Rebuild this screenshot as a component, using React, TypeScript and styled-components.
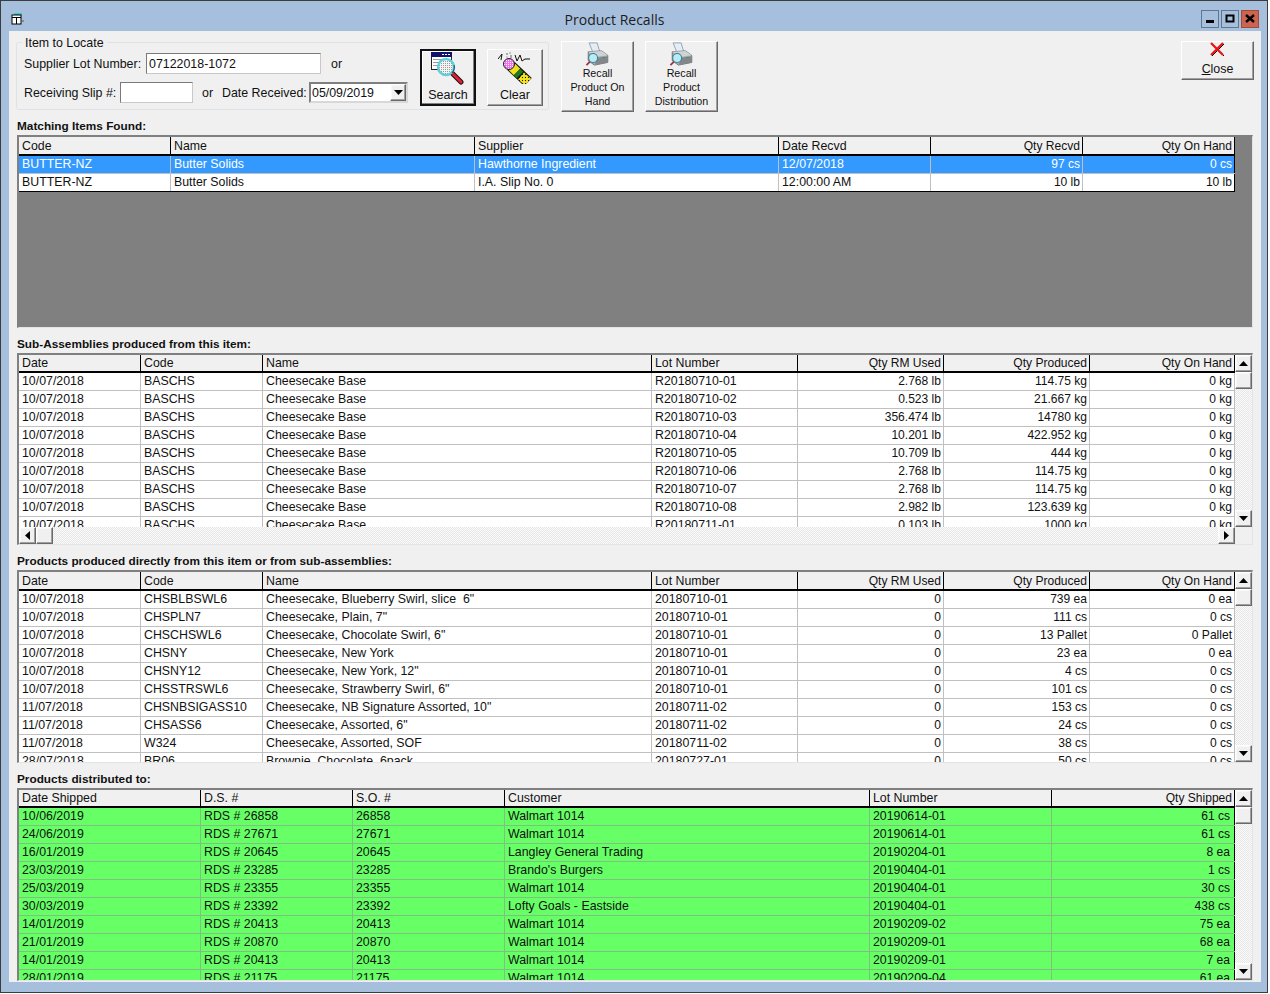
import React from 'react'
import styled, { createGlobalStyle } from 'styled-components'

const Global = createGlobalStyle`
  html, body { margin: 0; padding: 0; background: #fff; }
  body { font-family: "Liberation Sans", Arial, sans-serif; font-size: 12.4px; color: #111; }
`

const Window = styled.div`
  width: 1268px;
  height: 993px;
  box-sizing: border-box;
  background: #a6bfdc;
  border: 1px solid #3c3c3c;
  display: flex;
  flex-direction: column;
  overflow: hidden;
`
const TitleBar = styled.div`
  height: 30px;
  flex: none;
  display: flex;
  align-items: center;
  padding: 6px 8px 0 9px;
  box-sizing: border-box;
`
const TitleText = styled.div`
  flex: 1;
  text-align: center;
  font-family: "Open Sans", sans-serif;
  font-size: 14px;
  color: #1c1c1c;
  padding-left: 4px;
`
const CaptionButtons = styled.div`
  display: flex;
  gap: 2px;
`
const CaptionBtn = styled.div<{ $danger?: boolean }>`
  width: 18px;
  height: 18px;
  box-sizing: border-box;
  border: 1px solid ${p => (p.$danger ? '#a04a3a' : '#5f7693')};
  background: ${p => (p.$danger ? '#cd6450' : '#a6bfdc')};
  display: flex;
  align-items: center;
  justify-content: center;
`
const Client = styled.div`
  flex: 1;
  margin: 0 6px 10px 8px;
  background: #f0f0f0;
  padding: 4px 7px 0 7px;
  display: flex;
  flex-direction: column;
  min-height: 0;
`
const Toolbar = styled.div`
  display: flex;
  align-items: flex-start;
  height: 83px;
  flex: none;
`
const GroupBox = styled.fieldset`
  margin: 0;
  width: 533px;
  height: 75px;
  box-sizing: border-box;
  border: 1px solid #dfe3e8;
  border-radius: 3px;
  padding: 0 5px 0 7px;
  display: flex;
  align-items: flex-start;
  min-inline-size: 0;
`
const GroupLegend = styled.legend`
  margin-left: -2px;
  padding: 0 3px;
  height: 15px;
  line-height: 17px;
`
const FormArea = styled.div`
  width: 397px;
  display: flex;
  flex-direction: column;
  gap: 8px;
  padding-top: 3px;
`
const FormRow = styled.div`
  display: flex;
  align-items: center;
  height: 21px;
`
const FieldLabel = styled.span<{ $w: number; $ml?: number }>`
  width: ${p => p.$w}px;
  margin-left: ${p => p.$ml ?? 0}px;
  padding-top: 1px;
  flex: none;
  white-space: nowrap;
`
const TextInput = styled.input<{ $w: number }>`
  width: ${p => p.$w}px;
  height: 21px;
  box-sizing: border-box;
  border: 1px solid #7a7a7a;
  border-right-color: #c8c8c8;
  border-bottom-color: #c8c8c8;
  padding: 0 2px;
  margin: 0;
  font: inherit;
  color: #111;
  background: #fff;
  outline: none;
`
const SelectBox = styled.div`
  width: 99px;
  height: 21px;
  box-sizing: border-box;
  border: 2px solid #808080;
  border-right-color: #d8d8d8;
  border-bottom-color: #d8d8d8;
  background: #fff;
  display: flex;
  align-items: center;
  justify-content: space-between;
  padding-left: 1px;
  flex: none;
`
const Raised = styled.div`
  box-sizing: border-box;
  background: #f0f0f0;
  border: 1px solid;
  border-color: #fff #696969 #696969 #fff;
  box-shadow: inset -1px -1px 0 #a0a0a0, inset 1px 1px 0 #f8f8f8;
  display: flex;
  align-items: center;
  justify-content: center;
  flex: none;
`
const SelectArrow = styled(Raised)`
  width: 16px;
  height: 17px;
`
const ToolButton = styled.button<{ $default?: boolean; $w: number; $h: number; $mt: number; $ml: number }>`
  width: ${p => p.$w}px;
  height: ${p => p.$h}px;
  margin: ${p => p.$mt}px 0 0 ${p => p.$ml}px;
  padding: 0 0 ${p => (p.$default ? 2 : 3)}px;
  box-sizing: border-box;
  background: #f0f0f0;
  color: #111;
  font: inherit;
  flex: none;
  display: flex;
  flex-direction: column;
  align-items: center;
  justify-content: space-between;
  border: ${p => (p.$default ? '2px solid #111' : '1px solid')};
  border-color: ${p => (p.$default ? '#111' : '#fff #696969 #696969 #fff')};
  box-shadow: ${p =>
    p.$default
      ? 'inset -1px -1px 0 #808080, inset 1px 1px 0 #fff'
      : 'inset -1px -1px 0 #a0a0a0'};
`
const CloseButton = styled(ToolButton)`
  margin-left: auto;
`
const ButtonCaption = styled.span<{ $small?: boolean }>`
  font-size: ${p => (p.$small ? 10.7 : 12.5)}px;
  line-height: 14px;
  text-align: center;
  white-space: pre-line;
`
const CloseCaption = styled.span`
  margin-top: 1px;
  line-height: 14px;
`
const Underlined = styled.span`
  text-decoration: underline;
`
const SectionLabel = styled.div`
  height: 17px;
  line-height: 16px;
  font-weight: bold;
  font-size: 11.8px;
  padding-left: 1px;
  flex: none;
  white-space: nowrap;
`
const GridFrame = styled.div<{ $h: number; $mb?: number }>`
  margin-left: 1px;
  width: 1236px;
  height: ${p => p.$h}px;
  margin-bottom: ${p => p.$mb ?? 8}px;
  box-sizing: border-box;
  flex: none;
  border: 2px solid #808080;
  border-right: 1px solid #e4e4e4;
  border-bottom: 1px solid #e4e4e4;
  background: #808080;
  display: flex;
  flex-direction: column;
  overflow: hidden;
`
const GridMain = styled.div`
  flex: 1;
  min-height: 0;
  display: flex;
`
const TableArea = styled.div<{ $closed?: boolean }>`
  display: flex;
  flex-direction: column;
  align-self: flex-start;
  max-height: 100%;
  overflow: hidden;
  flex: none;
  ${p =>
    p.$closed
      ? `
    & > div:last-child { border-bottom-color: #000; }
    & > div > div:last-child { border-right-color: #000; }
  `
      : ''}
`
const HeaderRow = styled.div<{ $tall?: boolean }>`
  display: flex;
  height: ${p => (p.$tall ? 17 : 16)}px;
  line-height: ${p => (p.$tall ? 19 : 17)}px;
  flex: none;
  background: #f0f0f0;
  border-bottom: 2px solid #000 !important;
`
const Row = styled.div<{ $tone?: 'selected' | 'green' }>`
  display: flex;
  height: 17px;
  line-height: 17px;
  flex: none;
  border-bottom: 1px solid ${p => (p.$tone === 'green' ? '#7fbf7f' : '#c0c0c0')};
  background: ${p => (p.$tone === 'selected' ? '#3399ff' : p.$tone === 'green' ? '#66ff66' : '#fff')};
  color: ${p => (p.$tone === 'selected' ? '#fff' : '#111')};
`
const Cell = styled.div<{ $w: number; $right?: boolean; $head?: boolean; $green?: boolean }>`
  width: ${p => p.$w}px;
  flex: none;
  box-sizing: border-box;
  padding: 0 ${p => (p.$green ? 4 : 2)}px 0 3px;
  font-size: ${p => (p.$right ? 12.05 : 12.35)}px;
  text-align: ${p => (p.$right ? 'right' : 'left')};
  white-space: pre;
  overflow: hidden;
  border-right: 1px solid ${p => (p.$head ? '#000' : p.$green ? '#7fbf7f' : '#c0c0c0')};
`
const Track = styled.div`
  background-color: #fff;
  background-image: repeating-conic-gradient(#e6e6e6 0 25%, #fbfbfb 0 50%);
  background-size: 2px 2px;
`
const VScroll = styled(Track)`
  width: 17px;
  flex: none;
  display: flex;
  flex-direction: column;
  justify-content: space-between;
`
const ScrollColumn = styled.div`
  display: flex;
  flex-direction: column;
`
const ScrollBtn = styled(Raised)`
  width: 17px;
  height: 17px;
`
const HScrollRow = styled.div`
  display: flex;
  height: 17px;
  flex: none;
  background: #f0f0f0;
`
const HScrollTrack = styled(Track)`
  width: 1216px;
  display: flex;
  justify-content: space-between;
`
const HScrollLeft = styled.div`
  display: flex;
`
const Empty = styled.div`
  flex: 1;
  background: #f0f0f0;
`

type Col = { label: string; w: number; right?: boolean }

const Triangle = ({ dir }: { dir: 'up' | 'down' | 'left' | 'right' }) => {
  const pts = {
    up: '0,5 9,5 4.5,0',
    down: '0,0 9,0 4.5,5',
    left: '5,0 5,9 0,4.5',
    right: '0,0 0,9 5,4.5',
  }[dir]
  const horizontal = dir === 'left' || dir === 'right'
  return (
    <svg width={horizontal ? 5 : 9} height={horizontal ? 9 : 5} viewBox={horizontal ? '0 0 5 9' : '0 0 9 5'}>
      <polygon points={pts} fill="#000" />
    </svg>
  )
}

const ScrollV = () => (
  <VScroll>
    <ScrollColumn>
      <ScrollBtn><Triangle dir="up" /></ScrollBtn>
      <ScrollBtn />
    </ScrollColumn>
    <ScrollBtn><Triangle dir="down" /></ScrollBtn>
  </VScroll>
)

const ScrollH = () => (
  <HScrollRow>
    <HScrollTrack>
      <HScrollLeft>
        <ScrollBtn><Triangle dir="left" /></ScrollBtn>
        <ScrollBtn />
      </HScrollLeft>
      <ScrollBtn><Triangle dir="right" /></ScrollBtn>
    </HScrollTrack>
    <Empty />
  </HScrollRow>
)

const DataTable = ({ cols, rows, tone, selected, closed, tall }: { cols: Col[]; rows: string[][]; tone?: 'green'; selected?: number; closed?: boolean; tall?: boolean }) => (
  <TableArea $closed={closed}>
    <HeaderRow $tall={tall}>
      {cols.map(c => (
        <Cell key={c.label} $w={c.w} $right={c.right} $head>{c.label}</Cell>
      ))}
    </HeaderRow>
    {rows.map((r, i) => (
      <Row key={i} $tone={i === selected ? 'selected' : tone}>
        {r.map((v, j) => (
          <Cell key={j} $w={cols[j].w} $right={cols[j].right} $green={tone === 'green'}>{v}</Cell>
        ))}
      </Row>
    ))}
  </TableArea>
)

const TitleIcon = () => (
  <svg width="14" height="14" viewBox="0 0 14 14">
    <rect x="4" y="1" width="8" height="2" fill="#3ec6c6" />
    <rect x="2" y="3" width="9" height="9" fill="#fff" stroke="#000" />
    <rect x="2" y="5" width="9" height="1" fill="#000" />
    <rect x="6" y="5" width="1" height="7" fill="#000" />
    <rect x="12" y="8" width="2" height="2" fill="#888" />
  </svg>
)

const SearchIcon = () => (
  <svg width="34" height="34" viewBox="0 0 34 34">
    <defs>
      <pattern id="lens" width="2" height="2" patternUnits="userSpaceOnUse">
        <rect width="2" height="2" fill="#f4f4f4" />
        <rect width="1" height="1" fill="#9a9a9a" />
      </pattern>
    </defs>
    <rect x="0" y="1" width="21" height="18" fill="#222" />
    <rect x="1" y="2" width="19" height="16" fill="#fff" />
    <rect x="0" y="1" width="21" height="5" fill="#10106e" />
    <rect x="11" y="3" width="2" height="1" fill="#fff" />
    <rect x="14" y="3" width="2" height="1" fill="#fff" />
    <rect x="17" y="3" width="2" height="1" fill="#fff" />
    <rect x="2" y="8" width="9" height="1" fill="#9a9a9a" />
    <rect x="2" y="11" width="7" height="1" fill="#9a9a9a" />
    <rect x="2" y="14" width="7" height="1" fill="#9a9a9a" />
    <line x1="21" y1="22" x2="30" y2="31" stroke="#2a0a0a" strokeWidth="5" strokeLinecap="round" />
    <line x1="22" y1="23" x2="30" y2="31" stroke="#d8243a" strokeWidth="3" strokeLinecap="round" />
    <circle cx="15" cy="16" r="8" fill="url(#lens)" stroke="#5fd0da" strokeWidth="2.4" />
    <path d="M21 22 A8.5 8.5 0 0 0 23 14" fill="none" stroke="#155a70" strokeWidth="1.2" />
  </svg>
)

const ClearIcon = () => (
  <svg width="34" height="34" viewBox="0 0 34 34">
    <defs>
      <pattern id="chk" width="3" height="3" patternUnits="userSpaceOnUse">
        <rect width="3" height="3" fill="#f0e020" />
        <rect width="1" height="1" fill="#111" />
      </pattern>
      <pattern id="chkPink" width="2" height="2" patternUnits="userSpaceOnUse">
        <rect width="2" height="2" fill="#f070f0" />
        <rect width="1" height="1" fill="#fff" />
      </pattern>
    </defs>
    <path d="M0 9 L4 4 L3 10" fill="none" stroke="#111" />
    <path d="M17 5 L19 11 L22 5 L24 11 L27 9 L32 9" fill="none" stroke="#111" />
    <rect x="8" y="3" width="2" height="2" fill="#aaa" />
    <rect x="11" y="2" width="2" height="2" fill="#c4c4c4" />
    <rect x="12" y="5" width="2" height="3" fill="#aaa" />
    <rect x="8" y="6" width="2" height="2" fill="#ccc" />
    <line x1="13" y1="16" x2="30" y2="32" stroke="#111" strokeWidth="11" />
    <line x1="14" y1="17" x2="19" y2="22" stroke="#f0e020" strokeWidth="9" />
    <line x1="19" y1="22" x2="22" y2="25" stroke="#1e7a1e" strokeWidth="9" />
    <line x1="23" y1="26" x2="30" y2="32" stroke="url(#chk)" strokeWidth="9" />
    <circle cx="11" cy="14" r="5.5" fill="url(#chkPink)" stroke="#222" />
  </svg>
)

const PrinterIcon = () => (
  <svg width="28" height="27" viewBox="0 0 28 27">
    <polygon points="4,1 13,1 16,11 8,11" fill="#e4ecf4" stroke="#8ca0b0" />
    <polygon points="3,11 18,10 25,15 25,23 10,26 3,21" fill="#a8acb0" stroke="#6c7074" />
    <polygon points="3,11 18,10 25,15 11,17" fill="#cfd2d6" />
    <polygon points="11,18 25,16 25,23 11,26" fill="#83878c" />
    <rect x="19" y="17" width="3" height="1" fill="#2f9a4a" />
    <line x1="5" y1="22" x2="1" y2="26" stroke="#a83040" strokeWidth="2" />
    <circle cx="8.5" cy="18" r="5" fill="#b8ecf4" stroke="#3b7f94" strokeWidth="1.2" />
  </svg>
)

const CloseIcon = () => (
  <svg width="16" height="15" viewBox="0 0 16 15">
    <path d="M1 1 L13 13 M13 1 L1 13" stroke="#000" strokeWidth="1" transform="translate(1 1)" />
    <path d="M1 1 L13 13 M13 1 L1 13" stroke="#ee1010" strokeWidth="2.2" />
  </svg>
)

const matchCols: Col[] = [
  { label: 'Code', w: 152 },
  { label: 'Name', w: 304 },
  { label: 'Supplier', w: 304 },
  { label: 'Date Recvd', w: 152 },
  { label: 'Qty Recvd', w: 152, right: true },
  { label: 'Qty On Hand', w: 152, right: true },
]
const matchRows = [
  ['BUTTER-NZ', 'Butter Solids', 'Hawthorne Ingredient', '12/07/2018', '97 cs', '0 cs'],
  ['BUTTER-NZ', 'Butter Solids', 'I.A. Slip No. 0', '12:00:00 AM', '10 lb', '10 lb'],
]

const prodCols: Col[] = [
  { label: 'Date', w: 122 },
  { label: 'Code', w: 122 },
  { label: 'Name', w: 389 },
  { label: 'Lot Number', w: 146 },
  { label: 'Qty RM Used', w: 146, right: true },
  { label: 'Qty Produced', w: 146, right: true },
  { label: 'Qty On Hand', w: 145, right: true },
]
const subRows = [
  ['10/07/2018', 'BASCHS', 'Cheesecake Base', 'R20180710-01', '2.768 lb', '114.75 kg', '0 kg'],
  ['10/07/2018', 'BASCHS', 'Cheesecake Base', 'R20180710-02', '0.523 lb', '21.667 kg', '0 kg'],
  ['10/07/2018', 'BASCHS', 'Cheesecake Base', 'R20180710-03', '356.474 lb', '14780 kg', '0 kg'],
  ['10/07/2018', 'BASCHS', 'Cheesecake Base', 'R20180710-04', '10.201 lb', '422.952 kg', '0 kg'],
  ['10/07/2018', 'BASCHS', 'Cheesecake Base', 'R20180710-05', '10.709 lb', '444 kg', '0 kg'],
  ['10/07/2018', 'BASCHS', 'Cheesecake Base', 'R20180710-06', '2.768 lb', '114.75 kg', '0 kg'],
  ['10/07/2018', 'BASCHS', 'Cheesecake Base', 'R20180710-07', '2.768 lb', '114.75 kg', '0 kg'],
  ['10/07/2018', 'BASCHS', 'Cheesecake Base', 'R20180710-08', '2.982 lb', '123.639 kg', '0 kg'],
  ['10/07/2018', 'BASCHS', 'Cheesecake Base', 'R20180711-01', '0.103 lb', '1000 kg', '0 kg'],
]
const productRows = [
  ['10/07/2018', 'CHSBLBSWL6', 'Cheesecake, Blueberry Swirl, slice  6"', '20180710-01', '0', '739 ea', '0 ea'],
  ['10/07/2018', 'CHSPLN7', 'Cheesecake, Plain, 7"', '20180710-01', '0', '111 cs', '0 cs'],
  ['10/07/2018', 'CHSCHSWL6', 'Cheesecake, Chocolate Swirl, 6"', '20180710-01', '0', '13 Pallet', '0 Pallet'],
  ['10/07/2018', 'CHSNY', 'Cheesecake, New York', '20180710-01', '0', '23 ea', '0 ea'],
  ['10/07/2018', 'CHSNY12', 'Cheesecake, New York, 12"', '20180710-01', '0', '4 cs', '0 cs'],
  ['10/07/2018', 'CHSSTRSWL6', 'Cheesecake, Strawberry Swirl, 6"', '20180710-01', '0', '101 cs', '0 cs'],
  ['11/07/2018', 'CHSNBSIGASS10', 'Cheesecake, NB Signature Assorted, 10"', '20180711-02', '0', '153 cs', '0 cs'],
  ['11/07/2018', 'CHSASS6', 'Cheesecake, Assorted, 6"', '20180711-02', '0', '24 cs', '0 cs'],
  ['11/07/2018', 'W324', 'Cheesecake, Assorted, SOF', '20180711-02', '0', '38 cs', '0 cs'],
  ['28/07/2018', 'BR06', 'Brownie, Chocolate, 6pack', '20180727-01', '0', '50 cs', '0 cs'],
]
const shipCols: Col[] = [
  { label: 'Date Shipped', w: 182 },
  { label: 'D.S. #', w: 152 },
  { label: 'S.O. #', w: 152 },
  { label: 'Customer', w: 365 },
  { label: 'Lot Number', w: 182 },
  { label: 'Qty Shipped', w: 183, right: true },
]
const shipRows = [
  ['10/06/2019', 'RDS # 26858', '26858', 'Walmart 1014', '20190614-01', '61 cs'],
  ['24/06/2019', 'RDS # 27671', '27671', 'Walmart 1014', '20190614-01', '61 cs'],
  ['16/01/2019', 'RDS # 20645', '20645', 'Langley General Trading', '20190204-01', '8 ea'],
  ['23/03/2019', 'RDS # 23285', '23285', "Brando's Burgers", '20190404-01', '1 cs'],
  ['25/03/2019', 'RDS # 23355', '23355', 'Walmart 1014', '20190404-01', '30 cs'],
  ['30/03/2019', 'RDS # 23392', '23392', 'Lofty Goals - Eastside', '20190404-01', '438 cs'],
  ['14/01/2019', 'RDS # 20413', '20413', 'Walmart 1014', '20190209-02', '75 ea'],
  ['21/01/2019', 'RDS # 20870', '20870', 'Walmart 1014', '20190209-01', '68 ea'],
  ['14/01/2019', 'RDS # 20413', '20413', 'Walmart 1014', '20190209-01', '7 ea'],
  ['28/01/2019', 'RDS # 21175', '21175', 'Walmart 1014', '20190209-04', '61 ea'],
]

const App = () => (
  <>
    <Global />
    <Window>
      <TitleBar>
        <TitleIcon />
        <TitleText>Product Recalls</TitleText>
        <CaptionButtons>
          <CaptionBtn>
            <svg width="10" height="10" viewBox="0 0 10 10"><rect x="1" y="6" width="8" height="3" fill="#000" /></svg>
          </CaptionBtn>
          <CaptionBtn>
            <svg width="10" height="10" viewBox="0 0 10 10"><rect x="1.5" y="1.5" width="7" height="6" fill="none" stroke="#000" strokeWidth="2" /></svg>
          </CaptionBtn>
          <CaptionBtn $danger>
            <svg width="10" height="10" viewBox="0 0 10 10"><path d="M1 1 L9 8 M9 1 L1 8" stroke="#000" strokeWidth="2.4" /></svg>
          </CaptionBtn>
        </CaptionButtons>
      </TitleBar>
      <Client>
        <Toolbar>
          <GroupBox>
            <GroupLegend>Item to Locate</GroupLegend>
            <FormArea>
              <FormRow>
                <FieldLabel $w={122}>Supplier Lot Number:</FieldLabel>
                <TextInput $w={175} defaultValue="07122018-1072" />
                <FieldLabel $w={20} $ml={10}>or</FieldLabel>
              </FormRow>
              <FormRow>
                <FieldLabel $w={96}>Receiving Slip #:</FieldLabel>
                <TextInput $w={73} />
                <FieldLabel $w={20} $ml={9}>or</FieldLabel>
                <FieldLabel $w={87}>Date Received:</FieldLabel>
                <SelectBox>
                  05/09/2019
                  <SelectArrow><Triangle dir="down" /></SelectArrow>
                </SelectBox>
              </FormRow>
            </FormArea>
            <ToolButton $default $w={56} $h={57} $mt={-1} $ml={0}>
              <SearchIcon />
              <ButtonCaption>Search</ButtonCaption>
            </ToolButton>
            <ToolButton $w={56} $h={57} $mt={-1} $ml={11}>
              <ClearIcon />
              <ButtonCaption>Clear</ButtonCaption>
            </ToolButton>
          </GroupBox>
          <ToolButton $w={73} $h={71} $mt={6} $ml={12}>
            <PrinterIcon />
            <ButtonCaption $small>{'Recall\nProduct On\nHand'}</ButtonCaption>
          </ToolButton>
          <ToolButton $w={73} $h={71} $mt={6} $ml={11}>
            <PrinterIcon />
            <ButtonCaption $small>{'Recall\nProduct\nDistribution'}</ButtonCaption>
          </ToolButton>
          <CloseButton $w={73} $h={39} $mt={6} $ml={0}>
            <CloseIcon />
            <CloseCaption><Underlined>C</Underlined>lose</CloseCaption>
          </CloseButton>
        </Toolbar>

        <SectionLabel>Matching Items Found:</SectionLabel>
        <GridFrame $h={193}>
          <GridMain>
            <DataTable cols={matchCols} rows={matchRows} selected={0} closed tall />
          </GridMain>
        </GridFrame>

        <SectionLabel>Sub-Assemblies produced from this item:</SectionLabel>
        <GridFrame $h={192}>
          <GridMain>
            <DataTable cols={prodCols} rows={subRows} />
            <ScrollV />
          </GridMain>
          <ScrollH />
        </GridFrame>

        <SectionLabel>Products produced directly from this item or from sub-assemblies:</SectionLabel>
        <GridFrame $h={193}>
          <GridMain>
            <DataTable cols={prodCols} rows={productRows} tall />
            <ScrollV />
          </GridMain>
        </GridFrame>

        <SectionLabel>Products distributed to:</SectionLabel>
        <GridFrame $h={193} $mb={0}>
          <GridMain>
            <DataTable cols={shipCols} rows={shipRows} tone="green" closed />
            <ScrollV />
          </GridMain>
        </GridFrame>
      </Client>
    </Window>
  </>
)

export default App
